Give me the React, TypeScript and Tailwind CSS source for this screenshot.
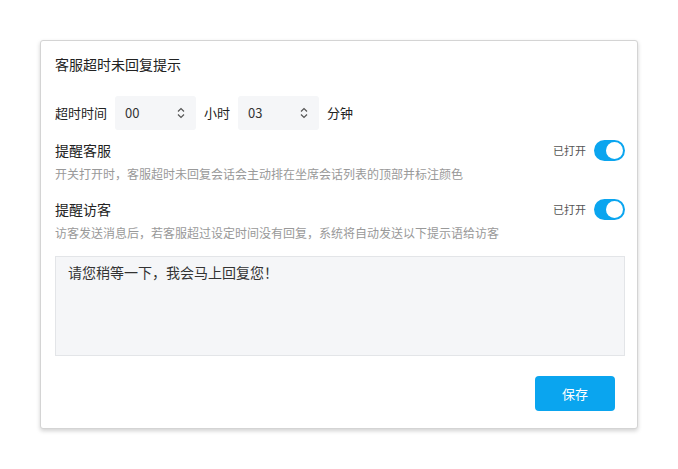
const font = { fontFamily: '"Noto Sans CJK SC", "Noto Sans", sans-serif' };

function Toggle() {
  return (
    <div className="flex items-center gap-[8px]">
      <span className="text-[11px] text-[#555]">已打开</span>
      <div className="w-[31px] h-[21px] rounded-full bg-[#0aa5ef] flex items-center justify-end pr-[2px]">
        <div className="w-[17px] h-[17px] rounded-full bg-white" />
      </div>
    </div>
  );
}

function Select({ value }: { value: string }) {
  return (
    <div className="w-[81px] h-[34px] bg-[#f5f6f8] rounded-[3px] flex items-center justify-between pl-[10px] pr-[10px]">
      <span className="text-[13px] text-[#333]">{value}</span>
      <svg width="10" height="14" viewBox="0 0 10 14" fill="none" stroke="#555" strokeWidth="1.2">
        <path d="M2 5.5 5 2.5 8 5.5M2 8.5 5 11.5 8 8.5" />
      </svg>
    </div>
  );
}

export default function App() {
  return (
    <div className="w-[678px] h-[469px] bg-white pt-[40px] pl-[40px]" style={font}>
      <div className="w-[598px] h-[389px] border border-[#d4d4d4] rounded-[3px] shadow-[0_2px_4px_rgba(0,0,0,0.18)] bg-white pl-[14px] pr-[12px] flex flex-col">
        <div className="text-[14px] text-[#222] mt-[13px] leading-[20px]">客服超时未回复提示</div>
        <div className="flex items-center gap-[8px] mt-[22px] text-[13px] text-[#222]">
          <span>超时时间</span>
          <Select value="00" />
          <span>小时</span>
          <Select value="03" />
          <span>分钟</span>
        </div>
        <div className="flex items-center justify-between mt-[10px]">
          <span className="text-[14px] text-[#222]">提醒客服</span>
          <Toggle />
        </div>
        <div className="text-[12px] text-[#999] mt-[4px]">开关打开时，客服超时未回复会话会主动排在坐席会话列表的顶部并标注颜色</div>
        <div className="flex items-center justify-between mt-[16px]">
          <span className="text-[14px] text-[#222]">提醒访客</span>
          <Toggle />
        </div>
        <div className="text-[12px] text-[#999] mt-[4px]">访客发送消息后，若客服超过设定时间没有回复，系统将自动发送以下提示语给访客</div>
        <div className="mt-[14px] h-[100px] bg-[#f5f6f8] border border-[#e3e5e8] px-[12px] py-[5px] text-[14px] text-[#333]">请您稍等一下，我会马上回复您！</div>
        <div className="flex justify-end mt-[20px] pr-[10px]">
          <button className="w-[80px] h-[35px] rounded-[4px] bg-[#0aa5ef] text-white text-[13px]">保存</button>
        </div>
      </div>
    </div>
  );
}
